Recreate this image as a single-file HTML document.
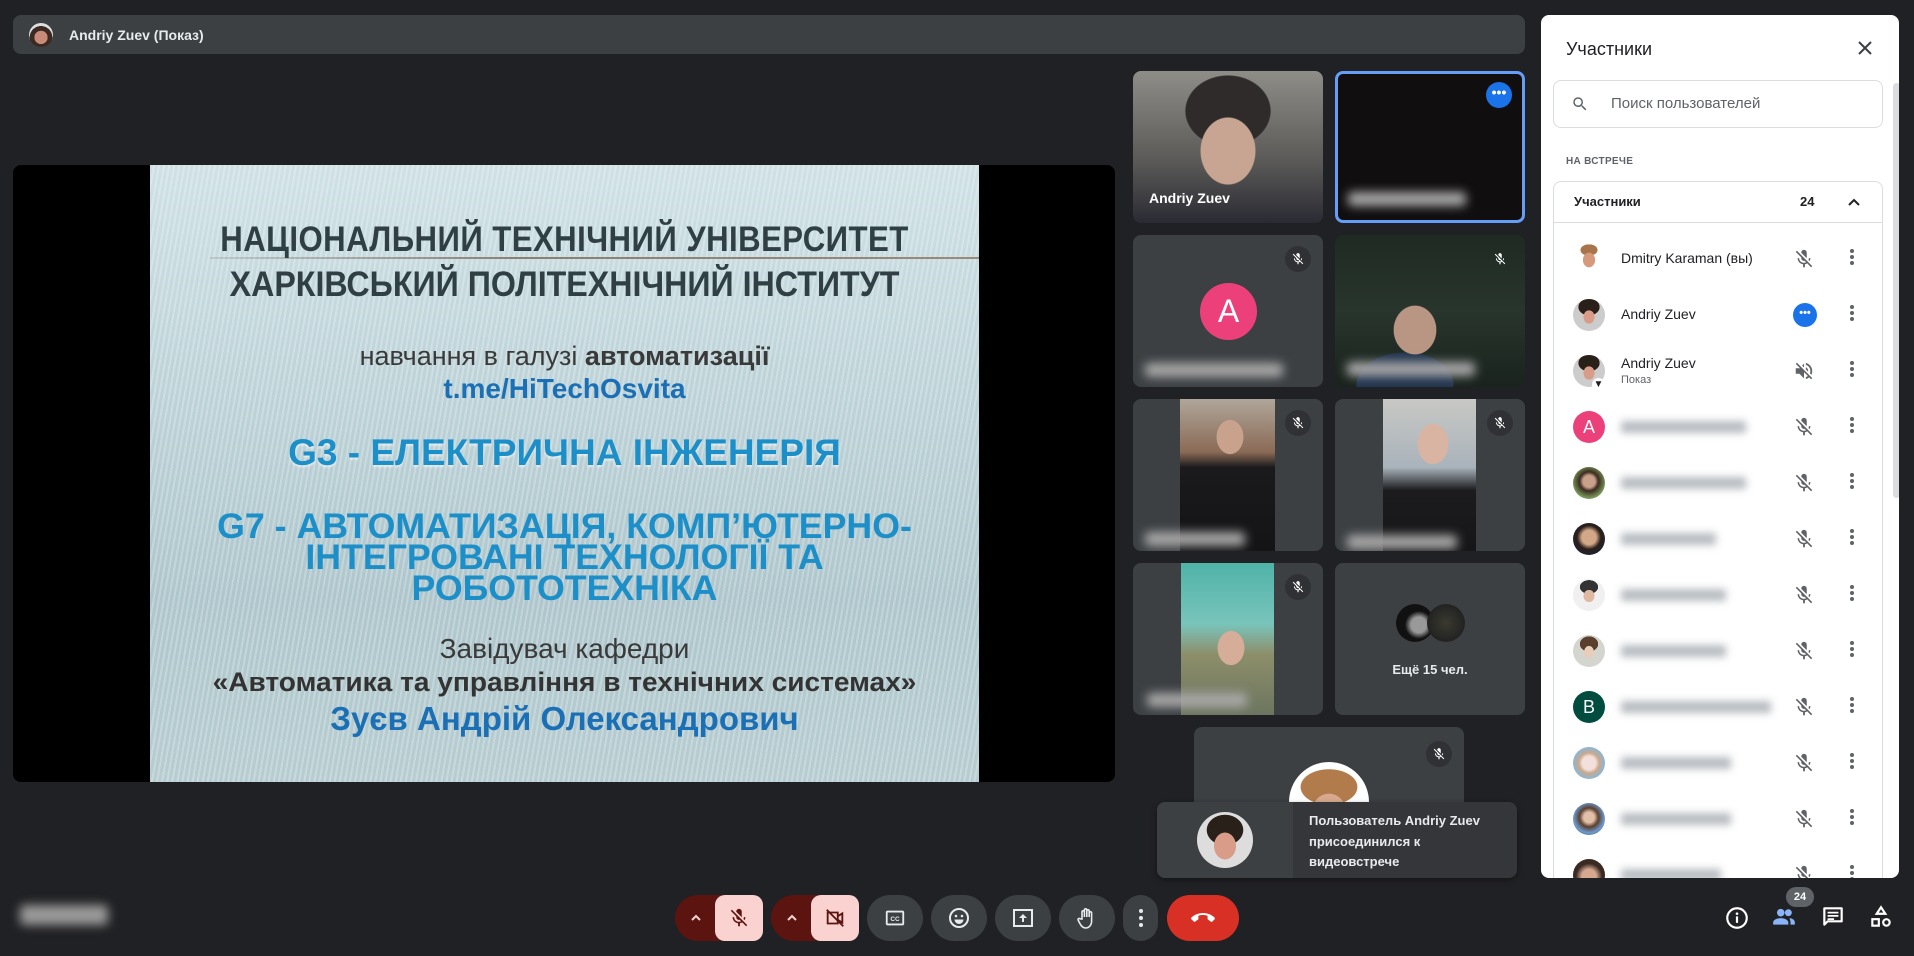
<!DOCTYPE html>
<html><head><meta charset="utf-8"><style>
*{margin:0;padding:0;box-sizing:border-box}
body{width:1914px;height:956px;background:#202124;position:relative;overflow:hidden;font-family:"Liberation Sans","Noto Sans CJK SC",sans-serif}
.a{position:absolute}
.tile{position:absolute;background:#3c4043;border-radius:8px;overflow:hidden}
.blur{position:absolute;height:14px;background:#a8a8a8;filter:blur(5px);border-radius:4px}
.mb{position:absolute;width:26px;height:26px;border-radius:50%;background:#303134;display:flex;align-items:center;justify-content:center}
.row{position:absolute;left:1553px;width:328px;height:56px}
.av{position:absolute;left:20px;top:12px;width:32px;height:32px;border-radius:50%;overflow:hidden}
.nm{position:absolute;left:68px;top:19px;font-size:14px;color:#202124}
.pb{position:absolute;left:68px;top:22px;height:12px;background:#9aa0a6;filter:blur(4px);opacity:.7}
.mic{position:absolute;left:240px;top:17px}
.dots{position:absolute;left:297px;top:18px;width:4px}
.dots i{display:block;width:4px;height:4px;border-radius:50%;background:#5f6368;margin-bottom:2px}
.sl{position:absolute;left:0;width:829px;text-align:center;white-space:nowrap}
.btn{position:absolute;top:895px;height:46px;border-radius:23px;background:#3c4043;display:flex;align-items:center;justify-content:center}
</style></head><body>

<div class="a" style="left:13px;top:15px;width:1512px;height:39px;background:#3c4043;border-radius:8px"></div>
<div class="a" style="left:29px;top:23px;width:24px;height:24px;border-radius:50%;background:radial-gradient(circle at 50% 60%,#c98b78 0 35%,#3a2a22 36% 60%,#ddd 61%)"></div>
<div class="a" style="left:69px;top:27px;color:#e8eaed;font-size:14px;font-weight:bold">Andriy Zuev (Показ)</div>

<div class="a" style="left:13px;top:165px;width:1102px;height:617px;background:#000;border-radius:8px"></div>
<div class="a" style="left:150px;top:165px;width:829px;height:617px;background:repeating-linear-gradient(100deg,rgba(255,255,255,.0) 0 3px,rgba(255,255,255,.25) 3px 5px),linear-gradient(180deg,#cfe1e5 0%,#bcd2d7 40%,#aec6cc 70%,#b7cdd1 100%);overflow:hidden">
  <div class="a" style="left:60px;top:92px;width:769px;height:2px;background:linear-gradient(90deg,rgba(120,110,100,.2),#8b7f73 40%,#9a8b7c)"></div>
  <div class="sl" style="top:55px;font-size:35px;font-weight:bold;color:#2f3f44;transform:scaleX(.89);letter-spacing:.5px">НАЦІОНАЛЬНИЙ ТЕХНІЧНИЙ УНІВЕРСИТЕТ</div>
  <div class="sl" style="top:100px;font-size:35px;font-weight:bold;color:#2f3f44;transform:scaleX(.92)">ХАРКІВСЬКИЙ ПОЛІТЕХНІЧНИЙ ІНСТИТУТ</div>
  <div class="sl" style="top:176px;font-size:27px;color:#3a3a3a;transform:scaleX(1.0)">навчання в галузі <b>автоматизації</b></div>
  <div class="sl" style="top:208px;font-size:28px;font-weight:bold;color:#1a6fb5;transform:scaleX(1.0)">t.me/HiTechOsvita</div>
  <div class="sl" style="top:267px;font-size:37px;font-weight:bold;color:#1d8fc8;text-shadow:0 2px 2px rgba(255,255,255,.6)">G3 - ЕЛЕКТРИЧНА ІНЖЕНЕРІЯ</div>
  <div class="sl" style="top:346px;font-size:35px;font-weight:bold;color:#1d8fc8;line-height:31px;transform:scaleX(1.02)">G7 - АВТОМАТИЗАЦІЯ, КОМП’ЮТЕРНО-<br>ІНТЕГРОВАНІ ТЕХНОЛОГІЇ ТА<br>РОБОТОТЕХНІКА</div>
  <div class="sl" style="top:468px;font-size:28px;color:#3a3a3a;transform:scaleX(1.0)">Завідувач кафедри</div>
  <div class="sl" style="top:502px;font-size:27px;font-weight:bold;color:#333;transform:scaleX(1.04)">«Автоматика та управління в технічних системах»</div>
  <div class="sl" style="top:535px;font-size:33px;font-weight:bold;color:#1a6fb5">Зуєв Андрій Олександрович</div>
</div>

<div class="tile" style="left:1133px;top:71px;width:190px;height:152px;background:radial-gradient(ellipse 45px 55px at 95px 80px,#c7a592 0 60%,transparent 62%),radial-gradient(ellipse 60px 50px at 95px 40px,#2e2b2a 0 70%,transparent 72%),linear-gradient(180deg,#8e8d88,#5a5957 60%,#2a2a33)">
  <div class="a" style="left:16px;top:119px;color:#fff;font-size:14px;font-weight:bold">Andriy Zuev</div>
</div>
<div class="tile" style="left:1335px;top:71px;width:190px;height:152px;background:#110e0f;border:3px solid #669df6">
  <div class="a" style="left:148px;top:8px;width:26px;height:26px;border-radius:50%;background:#1a73e8;color:#fff;font-size:14px;text-align:center;line-height:20px;font-weight:bold">•••</div>
  <div class="blur" style="left:10px;top:118px;width:118px"></div>
</div>
<div class="tile" style="left:1133px;top:235px;width:190px;height:152px">
  <div class="a" style="left:67px;top:48px;width:57px;height:57px;border-radius:50%;background:#ec407a;color:#fff;font-size:32px;text-align:center;line-height:57px">A</div>
  <div class="blur" style="left:12px;top:128px;width:138px"></div>
  <div class="mb" style="left:152px;top:11px"><svg width="14" height="14" viewBox="0 0 24 24" fill="#fff"><path d="M19 11h-1.7c0 .74-.16 1.43-.43 2.05l1.23 1.23c.56-.98.9-2.09.9-3.28zm-4.02.17c0-.06.02-.11.02-.17V5c0-1.66-1.34-3-3-3S9 3.34 9 5v.18l5.98 5.99zM4.27 3L3 4.27l6.01 6.01V11c0 1.66 1.33 3 2.99 3 .22 0 .44-.03.65-.08l1.66 1.66c-.71.33-1.5.52-2.31.52-2.76 0-5.3-2.1-5.3-5.1H5c0 3.41 2.72 6.23 6 6.72V21h2v-3.28c.91-.13 1.77-.45 2.54-.9L19.73 21 21 19.73 4.27 3z"/></svg></div>
</div>
<div class="tile" style="left:1335px;top:235px;width:190px;height:152px;background:radial-gradient(ellipse 35px 40px at 80px 95px,#b99584 0 60%,transparent 62%),radial-gradient(ellipse 60px 40px at 70px 150px,#233650 0 80%,transparent 82%),linear-gradient(180deg,#1e2a22,#28352c 50%,#1a231e)">
  <div class="blur" style="left:12px;top:127px;width:128px"></div>
  <div class="mb" style="left:152px;top:11px;background:transparent"><svg width="14" height="14" viewBox="0 0 24 24" fill="#fff"><path d="M19 11h-1.7c0 .74-.16 1.43-.43 2.05l1.23 1.23c.56-.98.9-2.09.9-3.28zm-4.02.17c0-.06.02-.11.02-.17V5c0-1.66-1.34-3-3-3S9 3.34 9 5v.18l5.98 5.99zM4.27 3L3 4.27l6.01 6.01V11c0 1.66 1.33 3 2.99 3 .22 0 .44-.03.65-.08l1.66 1.66c-.71.33-1.5.52-2.31.52-2.76 0-5.3-2.1-5.3-5.1H5c0 3.41 2.72 6.23 6 6.72V21h2v-3.28c.91-.13 1.77-.45 2.54-.9L19.73 21 21 19.73 4.27 3z"/></svg></div>
</div>
<div class="tile" style="left:1133px;top:399px;width:190px;height:152px">
  <div class="a" style="left:47px;top:0;width:95px;height:152px;background:radial-gradient(ellipse 22px 28px at 50px 38px,#c9a28e 0 60%,transparent 62%),linear-gradient(180deg,#b0a69a 0,#8a6a55 35%,#1a1a1c 45%,#141416)"></div>
  <div class="blur" style="left:12px;top:133px;width:100px"></div>
  <div class="mb" style="left:152px;top:11px"><svg width="14" height="14" viewBox="0 0 24 24" fill="#fff"><path d="M19 11h-1.7c0 .74-.16 1.43-.43 2.05l1.23 1.23c.56-.98.9-2.09.9-3.28zm-4.02.17c0-.06.02-.11.02-.17V5c0-1.66-1.34-3-3-3S9 3.34 9 5v.18l5.98 5.99zM4.27 3L3 4.27l6.01 6.01V11c0 1.66 1.33 3 2.99 3 .22 0 .44-.03.65-.08l1.66 1.66c-.71.33-1.5.52-2.31.52-2.76 0-5.3-2.1-5.3-5.1H5c0 3.41 2.72 6.23 6 6.72V21h2v-3.28c.91-.13 1.77-.45 2.54-.9L19.73 21 21 19.73 4.27 3z"/></svg></div>
</div>
<div class="tile" style="left:1335px;top:399px;width:190px;height:152px">
  <div class="a" style="left:48px;top:0;width:93px;height:152px;background:radial-gradient(ellipse 25px 33px at 50px 45px,#d9b4a3 0 60%,transparent 62%),linear-gradient(180deg,#c8c8c4 0,#a9b3bb 45%,#1c1c1e 60%,#161618)"></div>
  <div class="blur" style="left:12px;top:136px;width:110px"></div>
  <div class="mb" style="left:152px;top:11px"><svg width="14" height="14" viewBox="0 0 24 24" fill="#fff"><path d="M19 11h-1.7c0 .74-.16 1.43-.43 2.05l1.23 1.23c.56-.98.9-2.09.9-3.28zm-4.02.17c0-.06.02-.11.02-.17V5c0-1.66-1.34-3-3-3S9 3.34 9 5v.18l5.98 5.99zM4.27 3L3 4.27l6.01 6.01V11c0 1.66 1.33 3 2.99 3 .22 0 .44-.03.65-.08l1.66 1.66c-.71.33-1.5.52-2.31.52-2.76 0-5.3-2.1-5.3-5.1H5c0 3.41 2.72 6.23 6 6.72V21h2v-3.28c.91-.13 1.77-.45 2.54-.9L19.73 21 21 19.73 4.27 3z"/></svg></div>
</div>
<div class="tile" style="left:1133px;top:563px;width:190px;height:152px">
  <div class="a" style="left:48px;top:0;width:93px;height:152px;background:radial-gradient(ellipse 22px 28px at 50px 85px,#d5ad98 0 60%,transparent 62%),linear-gradient(180deg,#4fb3a8 0,#79c4bb 40%,#8d8f6a 60%,#6c7560)"></div>
  <div class="blur" style="left:14px;top:130px;width:100px"></div>
  <div class="mb" style="left:152px;top:11px"><svg width="14" height="14" viewBox="0 0 24 24" fill="#fff"><path d="M19 11h-1.7c0 .74-.16 1.43-.43 2.05l1.23 1.23c.56-.98.9-2.09.9-3.28zm-4.02.17c0-.06.02-.11.02-.17V5c0-1.66-1.34-3-3-3S9 3.34 9 5v.18l5.98 5.99zM4.27 3L3 4.27l6.01 6.01V11c0 1.66 1.33 3 2.99 3 .22 0 .44-.03.65-.08l1.66 1.66c-.71.33-1.5.52-2.31.52-2.76 0-5.3-2.1-5.3-5.1H5c0 3.41 2.72 6.23 6 6.72V21h2v-3.28c.91-.13 1.77-.45 2.54-.9L19.73 21 21 19.73 4.27 3z"/></svg></div>
</div>
<div class="tile" style="left:1335px;top:563px;width:190px;height:152px">
  <div class="a" style="left:61px;top:41px;width:38px;height:38px;border-radius:50%;background:radial-gradient(circle at 60% 55%,#999 0 25%,#111 45%)"></div>
  <div class="a" style="left:92px;top:41px;width:38px;height:38px;border-radius:50%;background:radial-gradient(circle at 50% 50%,#3a3a30,#222 70%)"></div>
  <div class="a" style="left:0;top:99px;width:190px;text-align:center;color:#e8eaed;font-size:13px;font-weight:bold">Ещё 15 чел.</div>
</div>
<div class="tile" style="left:1194px;top:727px;width:270px;height:140px">
  <div class="a" style="left:95px;top:35px;width:80px;height:80px;border-radius:50%;background:radial-gradient(ellipse 28px 30px at 40px 50px,#d8a98e 0 60%,transparent 62%),radial-gradient(ellipse 40px 25px at 40px 25px,#b27b4b 0 70%,transparent 72%),#fff"></div>
  <div class="mb" style="left:232px;top:14px"><svg width="14" height="14" viewBox="0 0 24 24" fill="#fff"><path d="M19 11h-1.7c0 .74-.16 1.43-.43 2.05l1.23 1.23c.56-.98.9-2.09.9-3.28zm-4.02.17c0-.06.02-.11.02-.17V5c0-1.66-1.34-3-3-3S9 3.34 9 5v.18l5.98 5.99zM4.27 3L3 4.27l6.01 6.01V11c0 1.66 1.33 3 2.99 3 .22 0 .44-.03.65-.08l1.66 1.66c-.71.33-1.5.52-2.31.52-2.76 0-5.3-2.1-5.3-5.1H5c0 3.41 2.72 6.23 6 6.72V21h2v-3.28c.91-.13 1.77-.45 2.54-.9L19.73 21 21 19.73 4.27 3z"/></svg></div>
</div>
<div class="a" style="left:1157px;top:802px;width:360px;height:76px;border-radius:8px;overflow:hidden;background:#35363a;box-shadow:0 2px 6px rgba(0,0,0,.4)">
  <div class="a" style="left:0;top:0;width:136px;height:76px;background:#3c4043"></div>
  <div class="a" style="left:40px;top:10px;width:56px;height:56px;border-radius:50%;background:radial-gradient(ellipse 18px 22px at 28px 34px,#d99c88 0 60%,transparent 62%),radial-gradient(ellipse 24px 20px at 28px 18px,#2a201a 0 75%,transparent 77%),#ddd"></div>
  <div class="a" style="left:152px;top:9px;color:#e8eaed;font-size:13px;font-weight:bold;line-height:20.5px">Пользователь Andriy Zuev<br>присоединился к<br>видеовстрече</div>
</div>

<div class="a" style="left:1541px;top:15px;width:358px;height:863px;background:#fff;border-radius:8px;overflow:hidden">
  <div class="a" style="left:25px;top:24px;font-size:18px;color:#202124">Участники</div>
  <svg class="a" style="left:316px;top:25px" width="16" height="16" viewBox="0 0 16 16"><path d="M2 2L14 14M14 2L2 14" stroke="#3c4043" stroke-width="2"/></svg>
  <div class="a" style="left:12px;top:65px;width:330px;height:48px;border:1px solid #dadce0;border-radius:8px"></div>
  <svg class="a" style="left:30px;top:80px" width="18" height="18" viewBox="0 0 24 24"><path d="M15.5 14h-.79l-.28-.27A6.47 6.47 0 0016 9.5 6.5 6.5 0 109.5 16c1.61 0 3.09-.59 4.23-1.57l.27.28v.79l5 4.99L20.49 19l-4.99-5zm-6 0C7.01 14 5 11.99 5 9.5S7.01 5 9.5 5 14 7.01 14 9.5 11.99 14 9.5 14z" fill="#5f6368"/></svg>
  <div class="a" style="left:70px;top:80px;font-size:15px;color:#5f6368">Поиск пользователей</div>
  <div class="a" style="left:25px;top:141px;font-size:10px;color:#5f6368;font-weight:bold;letter-spacing:.3px">НА ВСТРЕЧЕ</div>
  <div class="a" style="left:12px;top:166px;width:330px;height:760px;border:1px solid #dadce0;border-radius:8px"></div>
  <div class="a" style="left:12px;top:207px;width:330px;height:1px;background:#dadce0"></div>
  <div class="a" style="left:33px;top:179px;font-size:13px;color:#202124;font-weight:bold">Участники</div>
  <div class="a" style="left:259px;top:179px;font-size:13px;color:#202124;font-weight:bold">24</div>
  <svg class="a" style="left:306px;top:180px" width="14" height="14" viewBox="0 0 14 14"><path d="M2 10L7 5l5 5" stroke="#202124" stroke-width="2" fill="none"/></svg>
  <div class="a" style="left:352px;top:68px;width:7px;height:415px;background:#dadce0;border-radius:4px"></div>
</div>

<div class="row" style="top:231px"><div class="av" style="background:radial-gradient(ellipse 10px 12px at 16px 17px,#d59a7c 0 60%,transparent 62%),radial-gradient(ellipse 12px 8px at 16px 7px,#a8744b 0 70%,transparent 72%),#fff"></div><div class="nm">Dmitry Karaman (вы)</div>
<svg class="mic" width="22" height="22" viewBox="0 0 24 24" fill="#5f6368"><path d="M19 11h-1.7c0 .74-.16 1.43-.43 2.05l1.23 1.23c.56-.98.9-2.09.9-3.28zm-4.02.17c0-.06.02-.11.02-.17V5c0-1.66-1.34-3-3-3S9 3.34 9 5v.18l5.98 5.99zM4.27 3L3 4.27l6.01 6.01V11c0 1.66 1.33 3 2.99 3 .22 0 .44-.03.65-.08l1.66 1.66c-.71.33-1.5.52-2.31.52-2.76 0-5.3-2.1-5.3-5.1H5c0 3.41 2.72 6.23 6 6.72V21h2v-3.28c.91-.13 1.77-.45 2.54-.9L19.73 21 21 19.73 4.27 3z"/></svg><div class="dots"><i></i><i></i><i></i></div></div>
<div class="row" style="top:287px"><div class="av" style="background:radial-gradient(ellipse 9px 11px at 16px 18px,#d99c88 0 60%,transparent 62%),radial-gradient(ellipse 14px 11px at 16px 8px,#2a201a 0 75%,transparent 77%),#ccc"></div><div class="nm">Andriy Zuev</div>
<div class="a" style="left:240px;top:16px;width:24px;height:24px;border-radius:50%;background:#1a73e8;color:#fff;font-size:11px;text-align:center;line-height:20px;font-weight:bold">•••</div><div class="dots"><i></i><i></i><i></i></div></div>
<div class="row" style="top:343px"><div class="av" style="background:radial-gradient(ellipse 9px 11px at 16px 18px,#d99c88 0 60%,transparent 62%),radial-gradient(ellipse 14px 11px at 16px 8px,#2a201a 0 75%,transparent 77%),#ccc"></div>
<div class="a" style="left:39px;top:35px;width:13px;height:13px;border-radius:50%;background:#fff;color:#202124;font-size:10px;text-align:center;line-height:13px">▼</div>
<div class="nm" style="top:12px">Andriy Zuev</div><div class="a" style="left:68px;top:31px;font-size:11px;color:#5f6368">Показ</div>
<svg class="mic" width="22" height="22" viewBox="0 0 24 24" fill="#5f6368"><path d="M16.5 12A4.5 4.5 0 0014 7.97v2.21l2.45 2.45c.03-.2.05-.41.05-.63zM19 12c0 .94-.2 1.82-.54 2.64l1.51 1.51A8.8 8.8 0 0021 12c0-4.28-2.99-7.86-7-8.77v2.06c2.89.86 5 3.54 5 6.71zM4.27 3L3 4.27 7.73 9H3v6h4l5 5v-6.73l4.25 4.25c-.67.52-1.42.93-2.25 1.18v2.06a8.99 8.99 0 003.690-1.81L19.73 21 21 19.73l-9-9L4.27 3zM12 4L9.91 6.09 12 8.18V4z"/></svg><div class="dots"><i></i><i></i><i></i></div></div>

<div class="row" style="top:399px"><div class="av" style="background:#ec407a;color:#fff;text-align:center;line-height:32px;font-size:18px">A</div><div class="pb" style="width:125px"></div><svg class="mic" width="22" height="22" viewBox="0 0 24 24" fill="#5f6368"><path d="M19 11h-1.7c0 .74-.16 1.43-.43 2.05l1.23 1.23c.56-.98.9-2.09.9-3.28zm-4.02.17c0-.06.02-.11.02-.17V5c0-1.66-1.34-3-3-3S9 3.34 9 5v.18l5.98 5.99zM4.27 3L3 4.27l6.01 6.01V11c0 1.66 1.33 3 2.99 3 .22 0 .44-.03.65-.08l1.66 1.66c-.71.33-1.5.52-2.31.52-2.76 0-5.3-2.1-5.3-5.1H5c0 3.41 2.72 6.23 6 6.72V21h2v-3.28c.91-.13 1.77-.45 2.54-.9L19.73 21 21 19.73 4.27 3z"/></svg><div class="dots"><i></i><i></i><i></i></div></div>
<div class="row" style="top:455px"><div class="av" style="background:radial-gradient(circle at 50% 45%,#c9a08a 0 25%,#3b2b20 40%,#7a9a5a 70%)"></div><div class="pb" style="width:125px"></div><svg class="mic" width="22" height="22" viewBox="0 0 24 24" fill="#5f6368"><path d="M19 11h-1.7c0 .74-.16 1.43-.43 2.05l1.23 1.23c.56-.98.9-2.09.9-3.28zm-4.02.17c0-.06.02-.11.02-.17V5c0-1.66-1.34-3-3-3S9 3.34 9 5v.18l5.98 5.99zM4.27 3L3 4.27l6.01 6.01V11c0 1.66 1.33 3 2.99 3 .22 0 .44-.03.65-.08l1.66 1.66c-.71.33-1.5.52-2.31.52-2.76 0-5.3-2.1-5.3-5.1H5c0 3.41 2.72 6.23 6 6.72V21h2v-3.28c.91-.13 1.77-.45 2.54-.9L19.73 21 21 19.73 4.27 3z"/></svg><div class="dots"><i></i><i></i><i></i></div></div>
<div class="row" style="top:511px"><div class="av" style="background:radial-gradient(circle at 50% 45%,#d3a888 0 30%,#2b1f1a 50%,#1e2230 75%)"></div><div class="pb" style="width:95px"></div><svg class="mic" width="22" height="22" viewBox="0 0 24 24" fill="#5f6368"><path d="M19 11h-1.7c0 .74-.16 1.43-.43 2.05l1.23 1.23c.56-.98.9-2.09.9-3.28zm-4.02.17c0-.06.02-.11.02-.17V5c0-1.66-1.34-3-3-3S9 3.34 9 5v.18l5.98 5.99zM4.27 3L3 4.27l6.01 6.01V11c0 1.66 1.33 3 2.99 3 .22 0 .44-.03.65-.08l1.66 1.66c-.71.33-1.5.52-2.31.52-2.76 0-5.3-2.1-5.3-5.1H5c0 3.41 2.72 6.23 6 6.72V21h2v-3.28c.91-.13 1.77-.45 2.54-.9L19.73 21 21 19.73 4.27 3z"/></svg><div class="dots"><i></i><i></i><i></i></div></div>
<div class="row" style="top:567px"><div class="av" style="background:radial-gradient(ellipse 9px 10px at 16px 17px,#e0b9a2 0 60%,transparent 62%),radial-gradient(ellipse 12px 9px at 16px 8px,#333 0 75%,transparent 77%),#f0f0f0"></div><div class="pb" style="width:105px"></div><svg class="mic" width="22" height="22" viewBox="0 0 24 24" fill="#5f6368"><path d="M19 11h-1.7c0 .74-.16 1.43-.43 2.05l1.23 1.23c.56-.98.9-2.09.9-3.28zm-4.02.17c0-.06.02-.11.02-.17V5c0-1.66-1.34-3-3-3S9 3.34 9 5v.18l5.98 5.99zM4.27 3L3 4.27l6.01 6.01V11c0 1.66 1.33 3 2.99 3 .22 0 .44-.03.65-.08l1.66 1.66c-.71.33-1.5.52-2.31.52-2.76 0-5.3-2.1-5.3-5.1H5c0 3.41 2.72 6.23 6 6.72V21h2v-3.28c.91-.13 1.77-.45 2.54-.9L19.73 21 21 19.73 4.27 3z"/></svg><div class="dots"><i></i><i></i><i></i></div></div>
<div class="row" style="top:623px"><div class="av" style="background:radial-gradient(ellipse 8px 10px at 16px 17px,#e8cdbb 0 60%,transparent 62%),radial-gradient(ellipse 12px 10px at 16px 9px,#5a3f2c 0 75%,transparent 77%),#d5d5d0"></div><div class="pb" style="width:105px"></div><svg class="mic" width="22" height="22" viewBox="0 0 24 24" fill="#5f6368"><path d="M19 11h-1.7c0 .74-.16 1.43-.43 2.05l1.23 1.23c.56-.98.9-2.09.9-3.28zm-4.02.17c0-.06.02-.11.02-.17V5c0-1.66-1.34-3-3-3S9 3.34 9 5v.18l5.98 5.99zM4.27 3L3 4.27l6.01 6.01V11c0 1.66 1.33 3 2.99 3 .22 0 .44-.03.65-.08l1.66 1.66c-.71.33-1.5.52-2.31.52-2.76 0-5.3-2.1-5.3-5.1H5c0 3.41 2.72 6.23 6 6.72V21h2v-3.28c.91-.13 1.77-.45 2.54-.9L19.73 21 21 19.73 4.27 3z"/></svg><div class="dots"><i></i><i></i><i></i></div></div>
<div class="row" style="top:679px"><div class="av" style="background:#004d40;color:#fff;text-align:center;line-height:32px;font-size:18px">B</div><div class="pb" style="width:150px"></div><svg class="mic" width="22" height="22" viewBox="0 0 24 24" fill="#5f6368"><path d="M19 11h-1.7c0 .74-.16 1.43-.43 2.05l1.23 1.23c.56-.98.9-2.09.9-3.28zm-4.02.17c0-.06.02-.11.02-.17V5c0-1.66-1.34-3-3-3S9 3.34 9 5v.18l5.98 5.99zM4.27 3L3 4.27l6.01 6.01V11c0 1.66 1.33 3 2.99 3 .22 0 .44-.03.65-.08l1.66 1.66c-.71.33-1.5.52-2.31.52-2.76 0-5.3-2.1-5.3-5.1H5c0 3.41 2.72 6.23 6 6.72V21h2v-3.28c.91-.13 1.77-.45 2.54-.9L19.73 21 21 19.73 4.27 3z"/></svg><div class="dots"><i></i><i></i><i></i></div></div>
<div class="row" style="top:735px"><div class="av" style="background:radial-gradient(circle at 50% 50%,#f3e0dc 0 30%,#c9a98c 45%,#8bb6d6 70%)"></div><div class="pb" style="width:110px"></div><svg class="mic" width="22" height="22" viewBox="0 0 24 24" fill="#5f6368"><path d="M19 11h-1.7c0 .74-.16 1.43-.43 2.05l1.23 1.23c.56-.98.9-2.09.9-3.28zm-4.02.17c0-.06.02-.11.02-.17V5c0-1.66-1.34-3-3-3S9 3.34 9 5v.18l5.98 5.99zM4.27 3L3 4.27l6.01 6.01V11c0 1.66 1.33 3 2.99 3 .22 0 .44-.03.65-.08l1.66 1.66c-.71.33-1.5.52-2.31.52-2.76 0-5.3-2.1-5.3-5.1H5c0 3.41 2.72 6.23 6 6.72V21h2v-3.28c.91-.13 1.77-.45 2.54-.9L19.73 21 21 19.73 4.27 3z"/></svg><div class="dots"><i></i><i></i><i></i></div></div>
<div class="row" style="top:791px"><div class="av" style="background:radial-gradient(circle at 50% 45%,#e2c0a8 0 22%,#5b4030 40%,#6e9ad0 65%,#2a3a2a)"></div><div class="pb" style="width:110px"></div><svg class="mic" width="22" height="22" viewBox="0 0 24 24" fill="#5f6368"><path d="M19 11h-1.7c0 .74-.16 1.43-.43 2.05l1.23 1.23c.56-.98.9-2.09.9-3.28zm-4.02.17c0-.06.02-.11.02-.17V5c0-1.66-1.34-3-3-3S9 3.34 9 5v.18l5.98 5.99zM4.27 3L3 4.27l6.01 6.01V11c0 1.66 1.33 3 2.99 3 .22 0 .44-.03.65-.08l1.66 1.66c-.71.33-1.5.52-2.31.52-2.76 0-5.3-2.1-5.3-5.1H5c0 3.41 2.72 6.23 6 6.72V21h2v-3.28c.91-.13 1.77-.45 2.54-.9L19.73 21 21 19.73 4.27 3z"/></svg><div class="dots"><i></i><i></i><i></i></div></div>
<div class="row" style="top:847px;height:31px;overflow:hidden"><div class="av" style="background:radial-gradient(circle at 50% 55%,#d6a890 0 30%,#3a2a22 55%)"></div><div class="pb" style="width:100px"></div><svg class="mic" width="22" height="22" viewBox="0 0 24 24" fill="#5f6368"><path d="M19 11h-1.7c0 .74-.16 1.43-.43 2.05l1.23 1.23c.56-.98.9-2.09.9-3.28zm-4.02.17c0-.06.02-.11.02-.17V5c0-1.66-1.34-3-3-3S9 3.34 9 5v.18l5.98 5.99zM4.27 3L3 4.27l6.01 6.01V11c0 1.66 1.33 3 2.99 3 .22 0 .44-.03.65-.08l1.66 1.66c-.71.33-1.5.52-2.31.52-2.76 0-5.3-2.1-5.3-5.1H5c0 3.41 2.72 6.23 6 6.72V21h2v-3.28c.91-.13 1.77-.45 2.54-.9L19.73 21 21 19.73 4.27 3z"/></svg><div class="dots"><i></i><i></i><i></i></div></div>

<div class="a" style="left:20px;top:905px;width:88px;height:20px;background:#9a9a9a;filter:blur(5px);border-radius:4px"></div>

<div class="btn" style="left:675px;width:88px;background:#5c1410;justify-content:flex-start">
  <svg style="margin-left:15px" width="12" height="12" viewBox="0 0 12 12"><path d="M2 8l4-4 4 4" stroke="#f6d3d0" stroke-width="2" fill="none"/></svg>
  <div class="a" style="left:40px;top:0;width:48px;height:46px;background:#fad2cf;border-radius:10px;display:flex;align-items:center;justify-content:center"><svg width="22" height="22" viewBox="0 0 24 24" fill="#5c1410"><path d="M19 11h-1.7c0 .74-.16 1.43-.43 2.05l1.23 1.23c.56-.98.9-2.09.9-3.28zm-4.02.17c0-.06.02-.11.02-.17V5c0-1.66-1.34-3-3-3S9 3.34 9 5v.18l5.98 5.99zM4.27 3L3 4.27l6.01 6.01V11c0 1.66 1.33 3 2.99 3 .22 0 .44-.03.65-.08l1.66 1.66c-.71.33-1.5.52-2.31.52-2.76 0-5.3-2.1-5.3-5.1H5c0 3.41 2.72 6.23 6 6.72V21h2v-3.28c.91-.13 1.77-.45 2.54-.9L19.73 21 21 19.73 4.27 3z"/></svg></div>
</div>
<div class="btn" style="left:771px;width:88px;background:#5c1410;justify-content:flex-start">
  <svg style="margin-left:15px" width="12" height="12" viewBox="0 0 12 12"><path d="M2 8l4-4 4 4" stroke="#f6d3d0" stroke-width="2" fill="none"/></svg>
  <div class="a" style="left:40px;top:0;width:48px;height:46px;background:#fad2cf;border-radius:10px;display:flex;align-items:center;justify-content:center"><svg width="22" height="22" viewBox="0 0 24 24"><path d="M4 6h11v12H4z M15 10l5-3v10l-5-3" stroke="#5c1410" stroke-width="2" fill="none"/><path d="M3 3l18 18" stroke="#5c1410" stroke-width="2"/></svg></div>
</div>
<div class="btn" style="left:867px;width:56px"><svg width="22" height="22" viewBox="0 0 24 24"><rect x="3" y="5" width="18" height="14" rx="1" stroke="#e8eaed" stroke-width="2" fill="none"/><text x="12" y="15.5" font-size="7" font-weight="bold" fill="#e8eaed" text-anchor="middle" font-family="Liberation Sans">CC</text></svg></div>
<div class="btn" style="left:931px;width:56px"><svg width="24" height="24" viewBox="0 0 24 24"><circle cx="12" cy="12" r="9" stroke="#e8eaed" stroke-width="2" fill="none"/><circle cx="9" cy="10" r="1.3" fill="#e8eaed"/><circle cx="15" cy="10" r="1.3" fill="#e8eaed"/><path d="M7.5 13.5h9a4.5 4.5 0 01-9 0z" fill="#e8eaed"/></svg></div>
<div class="btn" style="left:995px;width:56px"><svg width="24" height="24" viewBox="0 0 24 24"><rect x="3" y="4" width="18" height="16" stroke="#e8eaed" stroke-width="2" fill="none"/><path d="M12 8l-4 4h3v4h2v-4h3z" fill="#e8eaed"/></svg></div>
<div class="btn" style="left:1059px;width:56px"><svg width="24" height="24" viewBox="0 0 24 24"><path d="M7 13V6a1.2 1.2 0 012.4 0v5V4a1.2 1.2 0 012.4 0v7V5a1.2 1.2 0 012.4 0v6V7a1.2 1.2 0 012.4 0v8c0 4-2.5 7-6 7-3 0-4.5-2-6-5l-1.5-3a1.2 1.2 0 012-1.2z" stroke="#e8eaed" stroke-width="1.6" fill="none"/></svg></div>
<div class="btn" style="left:1123px;width:35px"><svg width="4" height="18" viewBox="0 0 4 18"><circle cx="2" cy="2" r="2" fill="#e8eaed"/><circle cx="2" cy="9" r="2" fill="#e8eaed"/><circle cx="2" cy="16" r="2" fill="#e8eaed"/></svg></div>
<div class="btn" style="left:1167px;width:72px;background:#d93025"><svg width="24" height="24" viewBox="0 0 24 24"><path d="M12 9c-1.6 0-3.15.25-4.6.72v3.1c0 .39-.23.74-.56.9-.98.49-1.87 1.12-2.66 1.85-.18.18-.43.28-.7.28-.28 0-.53-.11-.71-.29L.29 13.08a.956.956 0 010-1.36C3.34 8.78 7.46 7 12 7s8.66 1.78 11.71 4.72c.18.18.29.43.29.71 0 .28-.11.53-.29.71l-2.48 2.48c-.18.18-.43.29-.71.29-.27 0-.52-.11-.7-.28a11.27 11.27 0 00-2.67-1.85.996.996 0 01-.56-.9v-3.1C15.15 9.25 13.6 9 12 9z" fill="#fff"/></svg></div>

<svg class="a" style="left:1724px;top:905px" width="26" height="26" viewBox="0 0 24 24"><circle cx="12" cy="12" r="9" stroke="#fff" stroke-width="2" fill="none"/><rect x="11" y="10.5" width="2" height="6" fill="#fff"/><circle cx="12" cy="8" r="1.2" fill="#fff"/></svg>
<div class="a" style="left:1786px;top:887px;width:28px;height:20px;border-radius:10px;background:#5f6368;color:#fff;font-size:11px;font-weight:bold;text-align:center;line-height:20px">24</div>
<svg class="a" style="left:1771px;top:904px" width="26" height="26" viewBox="0 0 24 24" fill="#8ab4f8"><circle cx="9" cy="8" r="3.5"/><circle cx="16" cy="8" r="3.2"/><path d="M2 19v-2c0-2.5 4-4 7-4s7 1.5 7 4v2z"/><path d="M17 13c2.5.2 5 1.5 5 4v2h-4v-2c0-1.6-.6-3-1-4z"/></svg>
<svg class="a" style="left:1820px;top:904px" width="26" height="26" viewBox="0 0 24 24"><path d="M4 4h16v12H7l-3 3z" stroke="#fff" stroke-width="2" fill="none" stroke-linejoin="round"/><path d="M7 8h10M7 11h10M7 14h6" stroke="#fff" stroke-width="1.6"/></svg>
<svg class="a" style="left:1868px;top:904px" width="26" height="26" viewBox="0 0 24 24" fill="none" stroke="#fff" stroke-width="2"><path d="M12 3l4 6H8z"/><rect x="4" y="14" width="6" height="6"/><circle cx="17" cy="17" r="3"/></svg>

</body></html>
